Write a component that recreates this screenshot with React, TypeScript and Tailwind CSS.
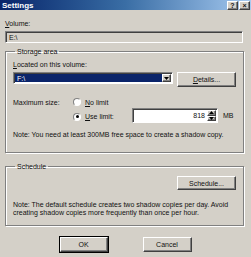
const raised =
  "border border-t-white border-l-white border-r-[#404040] border-b-[#404040] shadow-[inset_-1px_-1px_0_#808080]"
const sunken =
  "border border-t-[#808080] border-l-[#808080] border-r-white border-b-white shadow-[inset_1px_1px_0_#404040]"
const etched = "border border-[#808080] shadow-[inset_1px_1px_0_#fff,1px_1px_0_#fff]"

function Radio({ checked }: { checked?: boolean }) {
  return (
    <span className="relative flex h-[8px] w-[8px] shrink-0 items-center justify-center rounded-full border border-t-[#808080] border-l-[#808080] border-r-white border-b-white bg-white">
      {checked && <span className="h-[3px] w-[3px] rounded-full bg-black" />}
    </span>
  )
}

function Arrow({ up }: { up?: boolean }) {
  return (
    <svg width="5" height="3" viewBox="0 0 5 3">
      <path d={up ? "M2.5 0 L5 3 L0 3 Z" : "M0 0 L5 0 L2.5 3 Z"} fill="#000" />
    </svg>
  )
}

export default function App() {
  return (
    <div className="flex h-[257px] w-[251px] flex-col overflow-hidden bg-[#d4d0c8] font-['Liberation_Sans',Arial,sans-serif] text-[7px] leading-[9px] text-[#111]">
      {/* title bar */}
      <div className="flex h-[10px] items-center justify-between bg-gradient-to-r from-[#0a246a] via-[#3a6ea5] to-[#a6caf0] pl-[2px] pr-[1px]">
        <span className="text-[8px] font-bold leading-[9px] text-white">Settings</span>
        <div className="flex gap-[1px]">
          <span className={`flex h-[9px] w-[11px] items-center justify-center bg-[#d4d0c8] text-[7px] font-bold leading-none ${raised}`}>?</span>
          <span className={`flex h-[9px] w-[11px] items-center justify-center bg-[#d4d0c8] text-[7px] font-bold leading-none ${raised}`}>×</span>
        </div>
      </div>

      <div className="flex flex-col px-[5px]">
        <div className="mt-[9px]">
          <span className="underline">V</span>olume:
        </div>
        <div className={`mt-[3px] flex h-[12px] w-[238px] items-center pl-[3px] ${sunken}`}>E:\</div>

        {/* storage area */}
        <fieldset className={`mt-[4px] w-[239px] px-[7px] pb-[13px] ${etched}`}>
          <legend className="ml-[2px] px-[2px]">Storage area</legend>
          <div className="mt-[4px]">
            <span className="underline">L</span>ocated on this volume:
          </div>
          <div className="mt-[3px] flex items-start justify-between">
            <div className={`flex h-[12px] w-[160px] bg-white p-[1px] ${sunken}`}>
              <div className="flex flex-1 items-center bg-[#0a246a] pl-[2px] text-white">F:\</div>
              <div className={`flex w-[9px] items-center justify-center bg-[#d4d0c8] ${raised}`}>
                <Arrow />
              </div>
            </div>
            <button className={`h-[15px] w-[59px] bg-[#d4d0c8] ${raised}`}>
              <span className="underline">D</span>etails...
            </button>
          </div>

          <div className="mt-[10px] flex">
            <div className="w-[60px] pt-[1px]">Maximum size:</div>
            <div className="flex flex-col">
              <div className="flex h-[10px] items-center gap-[4px]">
                <Radio />
                <span>
                  <span className="underline">N</span>o limit
                </span>
              </div>
              <div className="mt-[1px] flex items-center">
                <div className="flex w-[59px] items-center gap-[4px] pt-[2px]">
                  <Radio checked />
                  <span>
                    <span className="underline">U</span>se limit:
                  </span>
                </div>
                <div className={`flex h-[15px] w-[86px] bg-white p-[1px] ${sunken}`}>
                  <div className="flex flex-1 items-center justify-end pr-[2px]">818</div>
                  <div className="flex w-[9px] flex-col">
                    <div className={`flex flex-1 items-center justify-center bg-[#d4d0c8] ${raised}`}>
                      <Arrow up />
                    </div>
                    <div className={`flex flex-1 items-center justify-center bg-[#d4d0c8] ${raised}`}>
                      <Arrow />
                    </div>
                  </div>
                </div>
                <span className="ml-[5px]">MB</span>
              </div>
            </div>
          </div>

          <div className="mt-[7px] whitespace-nowrap">
            Note: You need at least 300MB free space to create a shadow copy.
          </div>
        </fieldset>

        {/* schedule */}
        <fieldset className={`mt-[9px] w-[239px] px-[7px] pb-[8px] ${etched}`}>
          <legend className="ml-[2px] px-[2px]">Schedule</legend>
          <div className="mt-[5px] flex justify-end">
            <button className={`h-[14px] w-[59px] bg-[#d4d0c8] ${raised}`}>Schedule...</button>
          </div>
          <div className="mt-[11px] whitespace-nowrap leading-[8px]">
            Note: The default schedule creates two shadow copies per day. Avoid
            <br />
            creating shadow copies more frequently than once per hour.
          </div>
        </fieldset>

        <div className="mt-[11px] flex justify-center gap-[35px]">
          <button className={`h-[15px] w-[48px] bg-[#d4d0c8] ${raised} outline outline-1 outline-black`}>OK</button>
          <button className={`h-[15px] w-[49px] bg-[#d4d0c8] ${raised}`}>Cancel</button>
        </div>
      </div>
    </div>
  )
}
